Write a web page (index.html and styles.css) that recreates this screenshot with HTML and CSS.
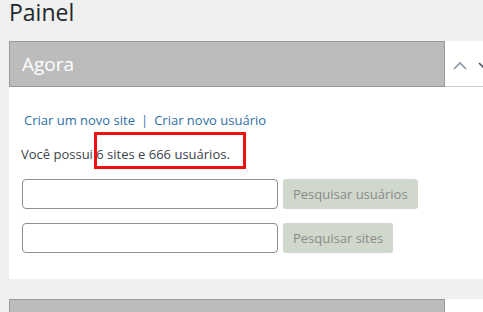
FILE: index.html
```html
<!DOCTYPE html>
<html lang="pt-BR">
<head>
<meta charset="utf-8">
<title>Painel</title>
<link rel="stylesheet" href="styles.css">
</head>
<body>
<div class="wrap">
  <h1 class="page-title">Painel</h1>
  <div class="panel">
    <div class="panel-head">
      <h2 class="panel-title">Agora</h2>
      <div class="panel-actions">
        <svg class="chev chev-up" width="16" height="10" viewBox="0 0 16 10"><path d="M2 8 L8 2 L14 8" fill="none" stroke="#8799ad" stroke-width="1.6"/></svg>
        <svg class="chev chev-down" width="16" height="10" viewBox="0 0 16 10"><path d="M2 2 L8 8 L14 2" fill="none" stroke="#50575e" stroke-width="1.6"/></svg>
      </div>
    </div>
    <div class="panel-body">
      <p class="links"><a href="#">Criar um novo site</a><span class="sep">|</span><a href="#">Criar novo usuário</a></p>
      <p class="summary">Você possui <span class="mark">6 sites e 666 usuários.</span></p>
      <form class="search-row">
        <input class="field" type="text">
        <button class="btn" type="button">Pesquisar usuários</button>
      </form>
      <form class="search-row">
        <input class="field" type="text">
        <button class="btn" type="button">Pesquisar sites</button>
      </form>
    </div>
  </div>
  <div class="panel">
    <div class="panel-head">
      <h2 class="panel-title">&nbsp;</h2>
      <div class="panel-actions"></div>
    </div>
  </div>
</div>
</body>
</html>
```
FILE: styles.css
```css
html, body {
  margin: 0;
  padding: 0;
  background: #f0f0f0;
  overflow: hidden;
  font-family: "Open Sans", "DejaVu Sans", sans-serif;
  color: #3c434a;
}
.wrap {
  padding-left: 9px;
}
.page-title {
  margin: 0;
  font-size: 23px;
  font-weight: 400;
  line-height: 25px;
  color: #23282d;
  height: 41px;
}
.panel {
  background: #fff;
  margin-bottom: 20px;
  width: 520px;
}
.panel-head {
  display: flex;
  height: 46px;
}
.panel-title {
  margin: 0;
  border: 1px solid #999;
  background: #bcbcbc;
  color: #fff;
  font-size: 19px;
  font-weight: 400;
  line-height: 44px;
  padding-left: 12px;
  box-sizing: border-box;
  width: 436px;
}
.panel-actions {
  flex: 1;
  display: flex;
  align-items: center;
  gap: 9px;
  padding-left: 7px;
  border-bottom: 1px solid #d0d0d0;
  height: 46px;
  box-sizing: border-box;
  background: #fff;
}
.chev {
  display: block;
  margin-top: 4px;
}
.panel-body {
  padding: 24px 0 26px 12px;
}
.links {
  margin: 0 0 16px;
  padding-left: 3px;
  font-size: 13px;
  line-height: 18px;
}
.links a {
  color: #2f6fa6;
  text-decoration: none;
}
.sep {
  color: #3a72a8;
  margin: 0 6px;
}
.summary {
  margin: 0 0 16px;
  font-size: 13px;
  line-height: 18px;
  color: #3c434a;
}
.mark {
  position: relative;
}
.mark::after {
  content: "";
  position: absolute;
  left: -2px;
  top: -13px;
  width: 146px;
  height: 31px;
  border: 3px solid #ee1111;
}
.search-row {
  display: flex;
  align-items: center;
  gap: 5px;
  margin: 0 0 14px 1px;
}
.search-row:last-child {
  margin-bottom: 0;
}
.field {
  width: 256px;
  height: 30px;
  box-sizing: border-box;
  border: 1px solid #8c8f94;
  border-radius: 4px;
  background: #fff;
  margin: 0;
}
.btn {
  height: 30px;
  box-sizing: border-box;
  border: 0;
  border-radius: 3px;
  background: #d0d8cc;
  color: #8a8a8a;
  font-family: "Open Sans", "DejaVu Sans", sans-serif;
  font-size: 13px;
  padding: 0 10px;
  margin: 0;
}
```
